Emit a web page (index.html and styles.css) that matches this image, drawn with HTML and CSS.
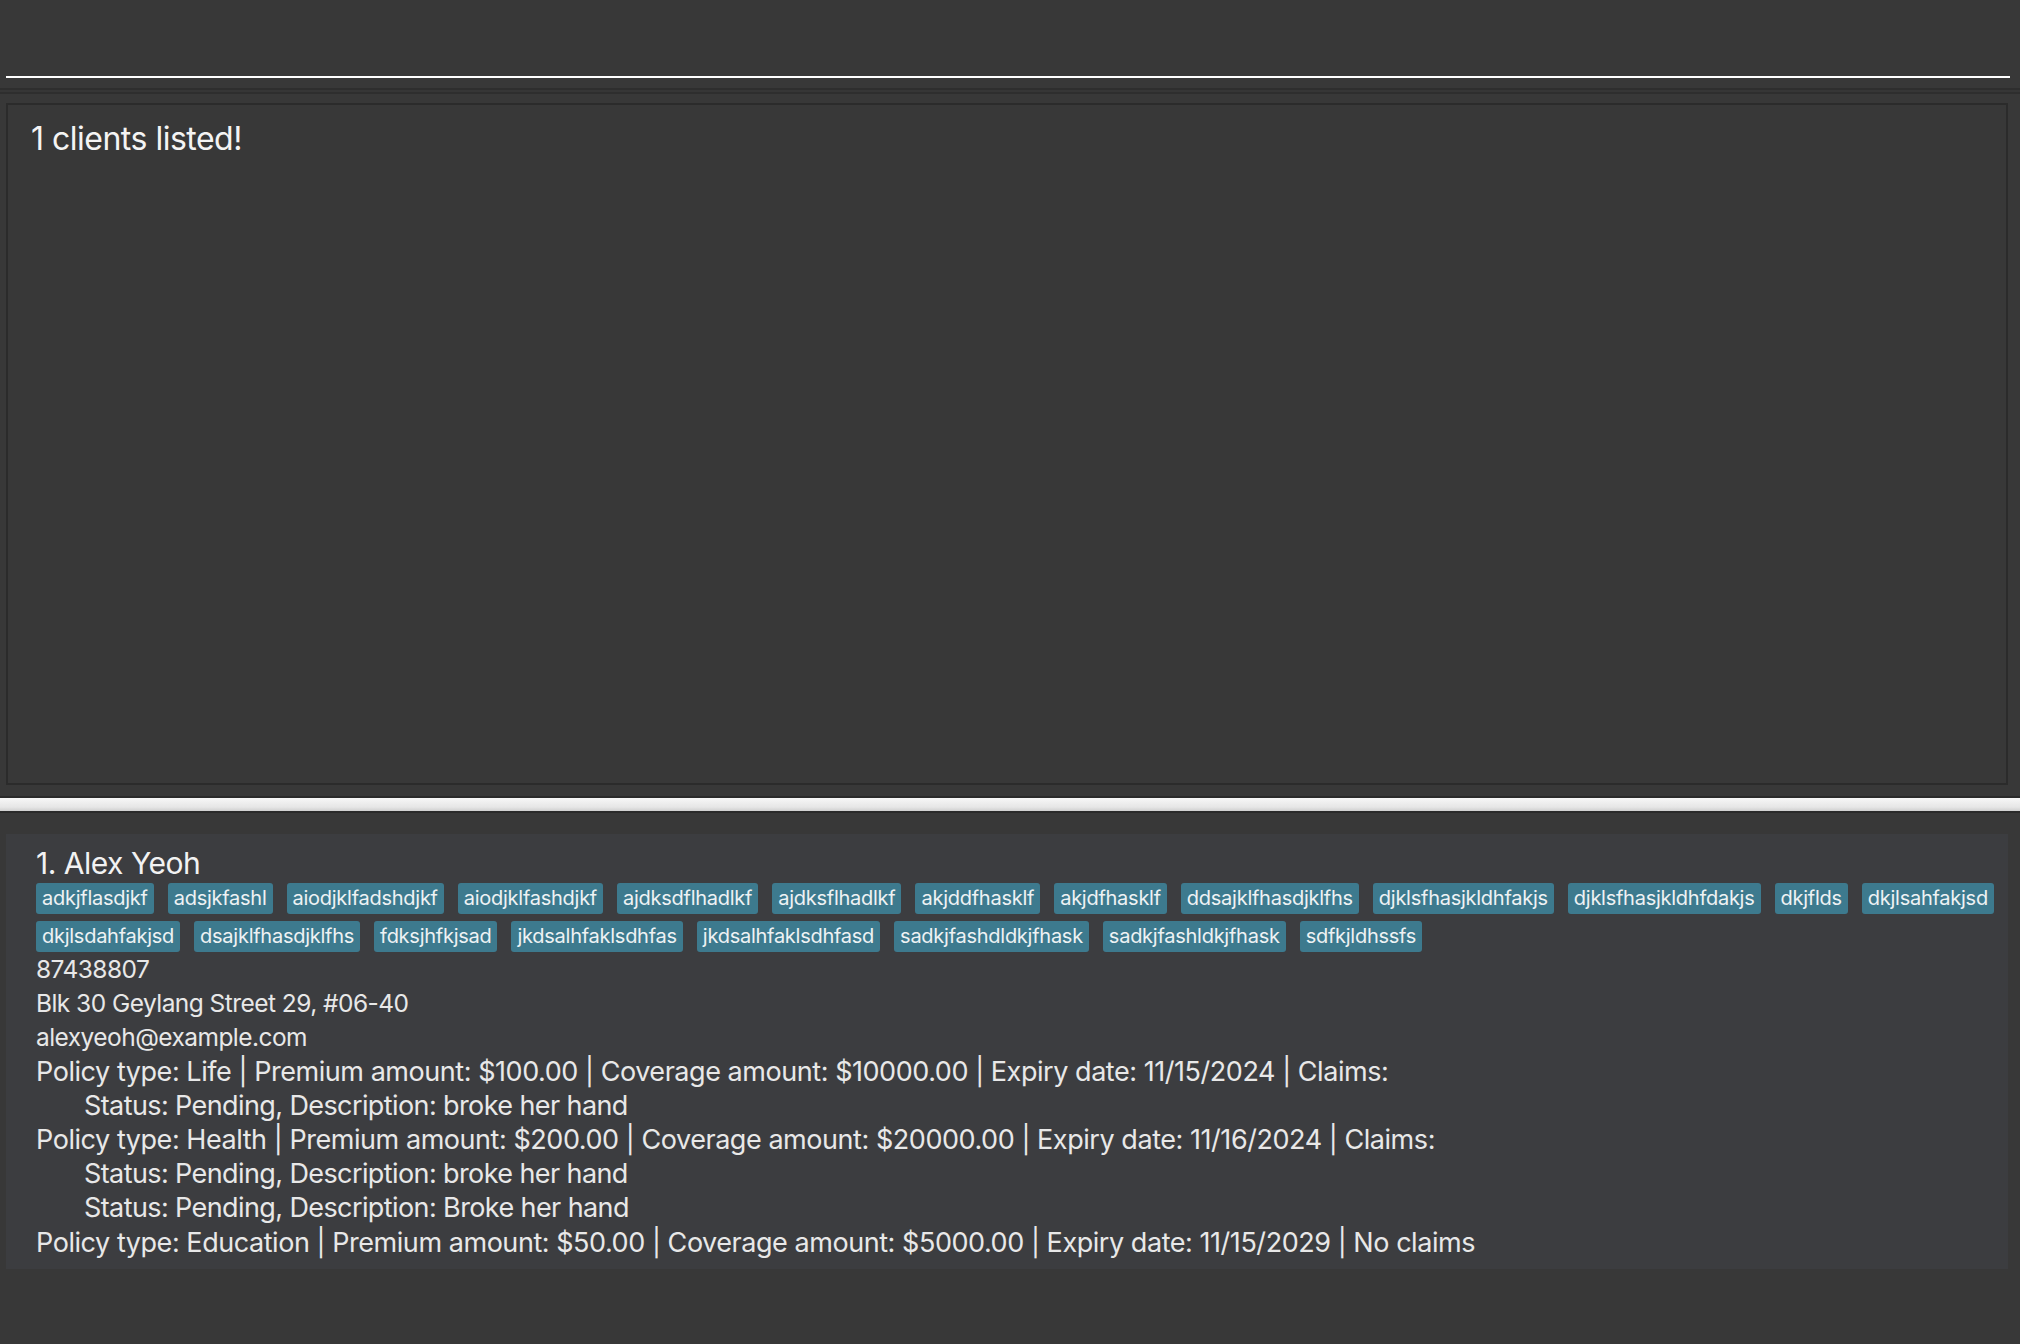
FILE: index.html
```html
<!DOCTYPE html>
<html>
<head>
<meta charset="utf-8">
<link rel="stylesheet" href="styles.css">
</head>
<body>
<div class="app">
  <div class="command-area">
    <div class="command-line"></div>
  </div>
  <div class="divider-double"></div>
  <div class="result-box">
    <div class="result-text">1 clients listed!</div>
  </div>
  <div class="splitter"></div>
  <div class="list-area">
    <div class="card">
      <div class="name">1. Alex Yeoh</div>
      <div class="tags">
        <span class="tag">adkjflasdjkf</span>
        <span class="tag">adsjkfashl</span>
        <span class="tag">aiodjklfadshdjkf</span>
        <span class="tag">aiodjklfashdjkf</span>
        <span class="tag">ajdksdflhadlkf</span>
        <span class="tag">ajdksflhadlkf</span>
        <span class="tag">akjddfhasklf</span>
        <span class="tag">akjdfhasklf</span>
        <span class="tag">ddsajklfhasdjklfhs</span>
        <span class="tag">djklsfhasjkldhfakjs</span>
        <span class="tag">djklsfhasjkldhfdakjs</span>
        <span class="tag">dkjflds</span>
        <span class="tag">dkjlsahfakjsd</span>
        <span class="tag">dkjlsdahfakjsd</span>
        <span class="tag">dsajklfhasdjklfhs</span>
        <span class="tag">fdksjhfkjsad</span>
        <span class="tag">jkdsalhfaklsdhfas</span>
        <span class="tag">jkdsalhfaklsdhfasd</span>
        <span class="tag">sadkjfashdldkjfhask</span>
        <span class="tag">sadkjfashldkjfhask</span>
        <span class="tag">sdfkjldhssfs</span>
      </div>
      <div class="line small">87438807</div>
      <div class="line small">Blk 30 Geylang Street 29, #06-40</div>
      <div class="line small">alexyeoh@example.com</div>
      <div class="line">Policy type: Life | Premium amount: $100.00 | Coverage amount: $10000.00 | Expiry date: 11/15/2024 | Claims:</div>
      <div class="line claim">Status: Pending, Description: broke her hand</div>
      <div class="line">Policy type: Health | Premium amount: $200.00 | Coverage amount: $20000.00 | Expiry date: 11/16/2024 | Claims:</div>
      <div class="line claim">Status: Pending, Description: broke her hand</div>
      <div class="line claim">Status: Pending, Description: Broke her hand</div>
      <div class="line">Policy type: Education | Premium amount: $50.00 | Coverage amount: $5000.00 | Expiry date: 11/15/2029 | No claims</div>
    </div>
  </div>
</div>
</body>
</html>
```

FILE: styles.css
```css
html, body {
  margin: 0;
  padding: 0;
  background: #383838;
  height: 100%;
}
body {
  font-family: "Inter", "Noto Sans", sans-serif;
  color: #ebebeb;
}
.app {
  display: flex;
  flex-direction: column;
  width: 2020px;
  height: 1344px;
}
.command-area {
  height: 78px;
  padding: 0 10px 0 6px;
  display: flex;
  align-items: flex-end;
}
.command-line {
  height: 2px;
  background: #ffffff;
  flex: 1;
}
.divider-double {
  margin-top: 10px;
  height: 2px;
  border-bottom: 2px solid #2e2e2e;
  border-top: 2px solid #2e2e2e;
  box-sizing: content-box;
  background: #363636;
}
.result-box {
  box-sizing: border-box;
  margin: 9px 12px 0 6px;
  height: 682px;
  border: 2px solid #2b2b2b;
  padding: 14px 0 0 23px;
}
.result-text {
  font-size: 32px;
  letter-spacing: -0.5px;
  color: #f4f4f4;
}
.splitter {
  margin-top: 11px;
  height: 13px;
  border-top: 2px solid #2a2a2a;
  border-bottom: 2px solid #2a2a2a;
  background: linear-gradient(#f7f7f7, #e6e6e6 70%, #cfcfcf);
}
.list-area {
  padding: 21px 12px 0 6px;
}
.card {
  background: #3c3d40;
  padding: 9px 4px 9px 30px;
  display: flex;
  flex-direction: column;
}
.name {
  font-size: 30px;
  line-height: 40px;
  letter-spacing: -0.5px;
  color: #f2f2f2;
}
.tags {
  display: flex;
  flex-wrap: wrap;
  gap: 7px 14px;
}
.tag {
  background: #3d7a8e;
  color: #eef2f4;
  font-size: 20px;
  line-height: 31px;
  padding: 0 6px;
  border-radius: 3px;
  letter-spacing: -0.26px;
}
.line {
  font-size: 27px;
  line-height: 34.2px;
  letter-spacing: -0.45px;
  color: #e8e8e8;
  white-space: nowrap;
}
.line.small {
  font-size: 24.5px;
  letter-spacing: -0.55px;
}
.claim {
  padding-left: 48px;
  letter-spacing: -0.6px;
}
```
